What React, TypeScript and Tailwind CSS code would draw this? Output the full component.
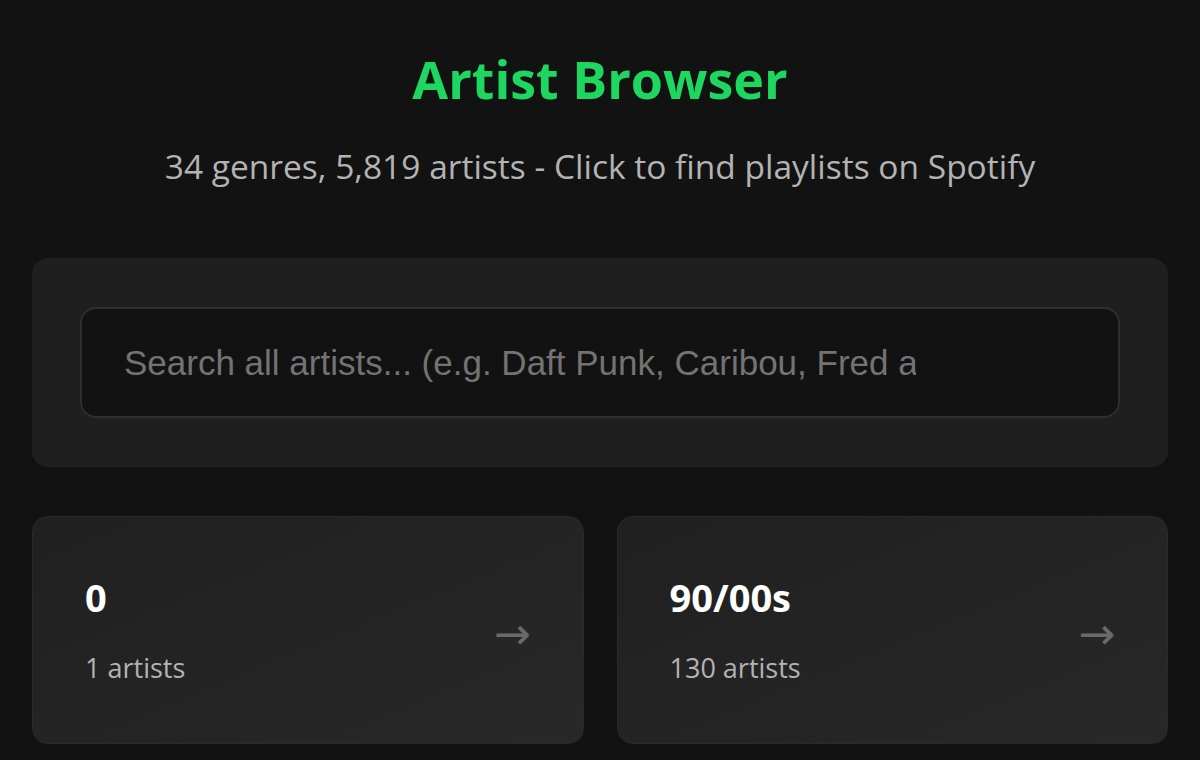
import { useState } from 'react';

const genres = [
  { name: '0', count: 1 },
  { name: '90/00s', count: 130 },
];

export default function App() {
  const [query, setQuery] = useState('');

  return (
    <div className="min-h-screen bg-[#121212] px-8 pt-[44px] pb-4 font-['Open_Sans','Noto_Sans',sans-serif]">
      <h1 className="text-center text-[52px] leading-[70px] font-bold text-[#1ed760]">Artist Browser</h1>
      <p className="mt-[30px] text-center text-[33.5px] leading-[44px] text-[#b3b3b3]">
        34 genres, 5,819 artists - Click to find playlists on Spotify
      </p>

      <div className="mt-[70px] rounded-2xl bg-[#1f1f1f] px-12 py-[49px]">
        <input
          value={query}
          onChange={(e) => setQuery(e.target.value)}
          placeholder="Search all artists... (e.g. Daft Punk, Caribou, Fred again..)"
          className="block h-[111px] w-full rounded-2xl border-2 border-[#2e2e2e] bg-[#121212] pl-[42px] pr-[202px] font-['Liberation_Sans',Arial,sans-serif] text-[35px] text-white placeholder:text-[#737373] outline-none"
        />
      </div>

      <div className="mt-[49px] grid grid-cols-2 gap-[33px]">
        {genres.map((g) => (
          <div
            key={g.name}
            className="flex h-[228px] items-center justify-between rounded-2xl border border-[#2a2a2a] bg-gradient-to-br from-[#202020] to-[#282828] pl-[52px] pr-[52px]"
          >
            <div>
              <div className="text-[38px] leading-[46px] font-bold text-white">{g.name}</div>
              <div className="mt-[30px] text-[27px] leading-[36px] text-[#b3b3b3]">{g.count} artists</div>
            </div>
            <span className="mt-[8px] text-[44px] leading-none text-[#6a6a6a] font-['DejaVu_Sans',sans-serif]">→</span>
          </div>
        ))}
      </div>
    </div>
  );
}
